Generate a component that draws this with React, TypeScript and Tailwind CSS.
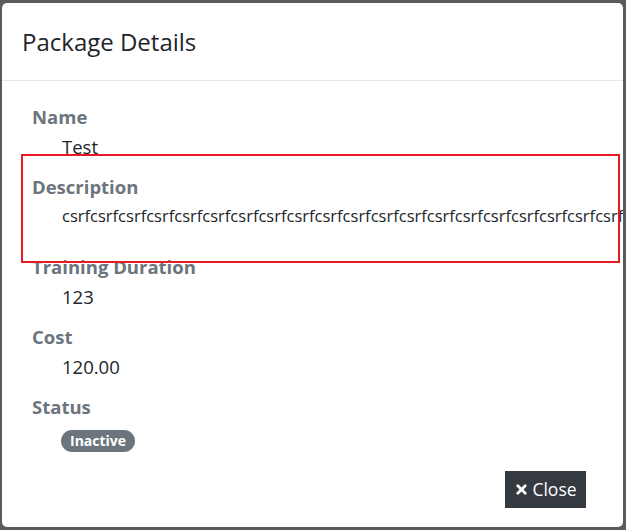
import { X } from "lucide-react";

const font = { fontFamily: '"Open Sans", "Noto Sans", sans-serif' };

function Field({ label, value }: { label: string; value: string }) {
  return (
    <div className="mb-[10px]">
      <div className="pl-[10px] text-[18.5px] font-bold leading-[30px] text-[#6c757d]">{label}</div>
      <div className="pl-[40px] text-[18.5px] leading-[30px] text-[#212529]">{value}</div>
    </div>
  );
}

export default function App() {
  return (
    <div className="h-[530px] w-[626px] overflow-hidden bg-[#5b5b5b] pl-[2px] pt-[3px]" style={font}>
      <div className="relative flex h-[524px] w-[621px] flex-col overflow-hidden rounded-[5px] bg-white">
        <div className="border-b border-[#e5e9ee] px-[20px] py-[20px]">
          <h5 className="text-[24px] font-normal leading-[37px] text-[#212529]">Package Details</h5>
        </div>
        <div className="flex-1 px-[20px] pt-[21px]">
          <Field label="Name" value="Test" />
          <div className="mb-[24px]">
            <div className="pl-[10px] text-[18.5px] font-bold leading-[30px] text-[#6c757d]">Description</div>
            <div className="whitespace-nowrap pl-[40px] pt-[2px] text-[16.5px] leading-[24px] text-[#212529]">
              {"csrf".repeat(40)}
            </div>
          </div>
          <Field label="Training Duration" value="123" />
          <Field label="Cost" value="120.00" />
          <div>
            <div className="pl-[10px] text-[18.5px] font-bold leading-[30px] text-[#6c757d]">Status</div>
            <div className="pl-[39px] pt-[6px]">
              <span className="inline-block rounded-full bg-[#6c757d] px-[9px] text-[14px] font-bold leading-[22px] text-white">
                Inactive
              </span>
            </div>
          </div>
        </div>
        <div className="flex justify-end pb-[19px] pr-[37px]">
          <button className="flex h-[37px] w-[81px] items-center justify-center gap-[3px] bg-[#343a40] text-[17.5px] text-white">
            <X size={15} strokeWidth={4.5} />
            Close
          </button>
        </div>
        <div className="pointer-events-none absolute left-[19px] top-[151px] h-[109px] w-[599px] border-2 border-[#e81b23]" />
      </div>
    </div>
  );
}
